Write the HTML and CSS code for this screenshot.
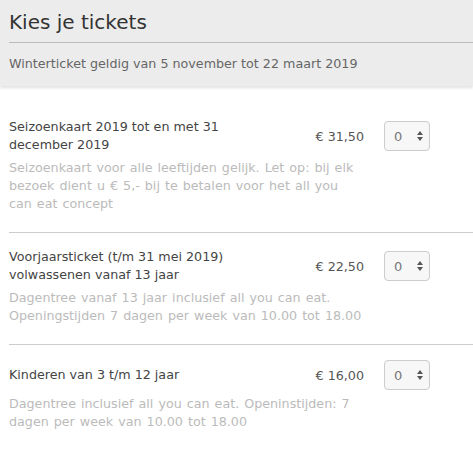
FILE: index.html
```html
<!DOCTYPE html>
<html lang="nl">
<head>
  <meta charset="UTF-8" />
  <meta name="viewport" content="width=device-width, initial-scale=1.0"/>
  <title>Kies je tickets</title>
  <link rel="stylesheet" href="styles.css">
</head>
<body>
  <div class="tickets-header">
    <h2>Kies je tickets</h2>
    <p class="period">Winterticket geldig van 5 november tot 22 maart 2019</p>
  </div>

  <div class="ticket-list">
    <div class="ticket">
      <div class="ticket-top">
        <div class="ticket-name">Seizoenkaart 2019 tot en met 31 december 2019</div>
        <div class="ticket-price">€ 31,50</div>
        <div class="qty"><span>0</span><span class="spin"></span></div>
      </div>
      <p class="ticket-desc">Seizoenkaart voor alle leeftijden gelijk. Let op: bij elk bezoek dient u € 5,- bij te betalen voor het all you can eat concept</p>
    </div>

    <div class="ticket">
      <div class="ticket-top">
        <div class="ticket-name">Voorjaarsticket (t/m 31 mei 2019) volwassenen vanaf 13 jaar</div>
        <div class="ticket-price">€ 22,50</div>
        <div class="qty"><span>0</span><span class="spin"></span></div>
      </div>
      <p class="ticket-desc">Dagentree vanaf 13 jaar inclusief all you can eat. Openingstijden 7 dagen per week van 10.00 tot 18.00</p>
    </div>

    <div class="ticket">
      <div class="ticket-top">
        <div class="ticket-name">Kinderen van 3 t/m 12 jaar</div>
        <div class="ticket-price">€ 16,00</div>
        <div class="qty"><span>0</span><span class="spin"></span></div>
      </div>
      <p class="ticket-desc">Dagentree inclusief all you can eat. Openinstijden: 7 dagen per week van 10.00 tot 18.00</p>
    </div>
  </div>
</body>
</html>
```

FILE: styles.css
```css
body {
  font-family: 'DejaVu Sans', Verdana, sans-serif;
  margin: 0;
  background-color: white;
  color: #444;
}
.tickets-header {
  background-color: #ececec;
  padding: 0 0 0 9px;
  height: 86px;
  box-shadow: 0 2px 3px rgba(0, 0, 0, 0.12);
}
.tickets-header h2 {
  margin: 0;
  padding-top: 9px;
  font-size: 20px;
  font-weight: normal;
  color: #333;
  line-height: 26px;
  padding-bottom: 7px;
  border-bottom: 1px solid #bbb;
}
.period {
  margin: 0;
  padding-top: 12px;
  font-size: 12.7px;
  line-height: 18px;
  color: #666;
}
.ticket-list {
  margin-top: 17px;
  padding-left: 9px;
}
.ticket {
  padding: 15px 0 19px;
  border-bottom: 1px solid #ccc;
}
.ticket:last-child {
  border-bottom: none;
}
.ticket-top {
  display: flex;
  align-items: center;
}
.ticket-name {
  width: 230px;
  font-size: 12.7px;
  line-height: 18px;
  color: #444;
}
.ticket-price {
  width: 125px;
  text-align: right;
  font-size: 12.7px;
  color: #555;
}
.qty {
  box-sizing: border-box;
  width: 46px;
  height: 30px;
  margin-left: 20px;
  border: 1px solid #ccc;
  border-radius: 4px;
  background-color: #f7f7f7;
  display: flex;
  align-items: center;
  justify-content: space-between;
  padding: 0 6px 0 9px;
  font-size: 13px;
  color: #777;
}
/* up/down arrows of the number picker */
.spin {
  width: 0;
  height: 0;
  border-left: 3px solid transparent;
  border-right: 3px solid transparent;
  position: relative;
}
.spin::before,
.spin::after {
  content: "";
  position: absolute;
  left: -3px;
  border-left: 3px solid transparent;
  border-right: 3px solid transparent;
}
.spin::before {
  bottom: 1px;
  border-bottom: 4px solid #555;
}
.spin::after {
  top: 1px;
  border-top: 4px solid #555;
}
.ticket-desc {
  width: 354px;
  margin: 5px 0 0;
  font-size: 12.7px;
  line-height: 18px;
  word-spacing: 1px;
  color: #bbb;
}
```
